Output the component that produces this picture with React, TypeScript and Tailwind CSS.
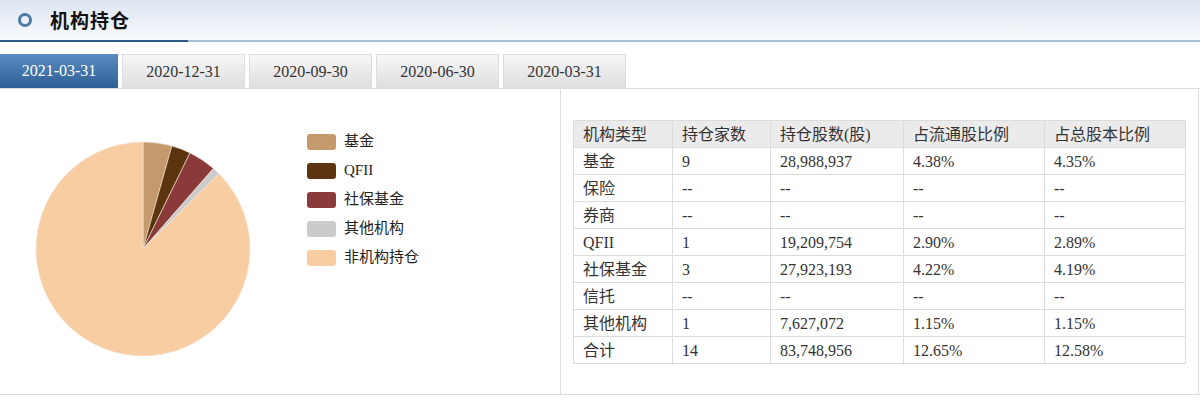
import React from 'react';

const serif = { fontFamily: '"Liberation Serif", "Noto Sans CJK SC", serif' };

const tabs = ['2021-03-31', '2020-12-31', '2020-09-30', '2020-06-30', '2020-03-31'];

const slices = [
  { name: '基金', value: 4.35, color: '#c49a6c' },
  { name: 'QFII', value: 2.89, color: '#5c3410' },
  { name: '社保基金', value: 4.19, color: '#8b3a3a' },
  { name: '其他机构', value: 1.15, color: '#cbcbcb' },
  { name: '非机构持仓', value: 87.42, color: '#f7cda1' },
];

const rows = [
  ['基金', '9', '28,988,937', '4.38%', '4.35%'],
  ['保险', '--', '--', '--', '--'],
  ['券商', '--', '--', '--', '--'],
  ['QFII', '1', '19,209,754', '2.90%', '2.89%'],
  ['社保基金', '3', '27,923,193', '4.22%', '4.19%'],
  ['信托', '--', '--', '--', '--'],
  ['其他机构', '1', '7,627,072', '1.15%', '1.15%'],
  ['合计', '14', '83,748,956', '12.65%', '12.58%'],
];

const colWidths = ['w-[99px]', 'w-[98px]', 'w-[133px]', 'w-[141px]', 'w-[141px]'];

function Pie() {
  const cx = 143;
  const cy = 160;
  const r = 107;
  const total = slices.reduce((s, x) => s + x.value, 0);
  let acc = 0;
  return (
    <svg width="300" height="306" className="block">
      {slices.map((s) => {
        const a0 = (acc / total) * Math.PI * 2;
        acc += s.value;
        const a1 = (acc / total) * Math.PI * 2;
        const x0 = cx + r * Math.sin(a0);
        const y0 = cy - r * Math.cos(a0);
        const x1 = cx + r * Math.sin(a1);
        const y1 = cy - r * Math.cos(a1);
        const large = a1 - a0 > Math.PI ? 1 : 0;
        return (
          <path
            key={s.name}
            d={`M${cx},${cy} L${x0},${y0} A${r},${r} 0 ${large} 1 ${x1},${y1} Z`}
            fill={s.color}
            stroke="#f3e6d8"
            strokeWidth="0.6"
          />
        );
      })}
    </svg>
  );
}

export default function App() {
  return (
    <div className="w-[1200px] h-[411px] bg-white text-[#333]" style={serif}>
      {/* title bar */}
      <div className="h-[40px] bg-gradient-to-b from-[#dde5f0] to-[#f9fafc] flex items-center">
        <div className="ml-[18px] w-[14px] h-[14px] rounded-full border-[3px] border-[#4d7ba6]" />
        <div
          className="ml-[18px] text-[19px] font-bold text-[#111] tracking-[1px]"
          style={{ fontFamily: '"Noto Sans CJK SC", sans-serif' }}
        >
          机构持仓
        </div>
      </div>
      <div className="flex h-[2px]">
        <div className="w-[188px] bg-[#2b5a86]" />
        <div className="flex-1 bg-[#a3c2d9]" />
      </div>

      {/* tabs */}
      <div className="mt-[12px] flex gap-[4px] border-b border-[#dcdcdc] h-[35px]">
        {tabs.map((t, i) =>
          i === 0 ? (
            <div
              key={t}
              className="w-[118px] h-[34px] flex items-center justify-center text-[16px] text-white bg-gradient-to-b from-[#5b8cc2] to-[#2d5f95]"
            >
              {t}
            </div>
          ) : (
            <div
              key={t}
              className="w-[123px] h-[34px] flex items-center justify-center text-[16px] text-[#333] border border-b-0 border-[#dddddd] bg-gradient-to-b from-[#f7f7f7] to-[#dedede]"
            >
              {t}
            </div>
          )
        )}
      </div>

      {/* content */}
      <div className="flex h-[306px] border-b border-[#dcdcdc]">
        <div className="w-[561px] border-r border-[#dcdcdc] flex">
          <Pie />
          <div className="ml-[7px] mt-[44px] flex flex-col gap-[12px]">
            {slices.map((s) => (
              <div key={s.name} className="flex items-center h-[17px]">
                <div className="w-[29px] h-[16px] rounded-[3px]" style={{ backgroundColor: s.color }} />
                <span className="ml-[8px] text-[15px] text-[#222]">{s.name}</span>
              </div>
            ))}
          </div>
        </div>
        <div className="w-[638px] border-r border-[#dcdcdc] pl-[12px] pt-[31px]">
          <table className="border-collapse text-[16px] text-[#333]">
            <thead>
              <tr className="bg-[#ebebeb] h-[27px]">
                {['机构类型', '持仓家数', '持仓股数(股)', '占流通股比例', '占总股本比例'].map((h, i) => (
                  <th
                    key={h}
                    className={`${colWidths[i]} border border-[#dcdcdc] text-left font-normal pl-[9px] py-0 leading-[25px]`}
                  >
                    {h}
                  </th>
                ))}
              </tr>
            </thead>
            <tbody>
              {rows.map((r) => (
                <tr key={r[0]} className="h-[27px]">
                  {r.map((c, i) => (
                    <td
                      key={i}
                      className={`${colWidths[i]} border border-[#dcdcdc] pl-[9px] py-0 leading-[25px]`}
                    >
                      {c}
                    </td>
                  ))}
                </tr>
              ))}
            </tbody>
          </table>
        </div>
      </div>
    </div>
  );
}
